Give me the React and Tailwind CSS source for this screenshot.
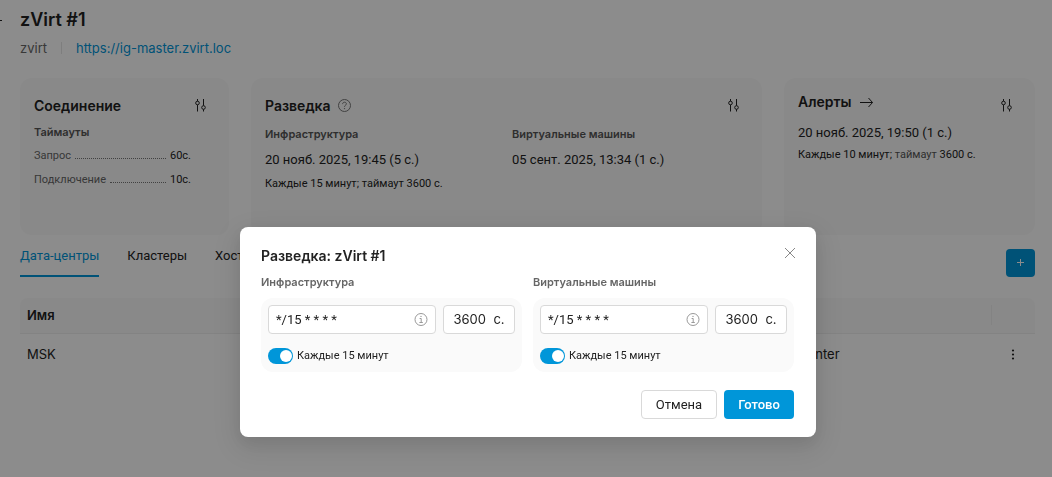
// Cluster page with the discovery schedule dialog open on top of it.

import { useState } from 'react';

const SlidersIcon = () => (
  <svg width="14" height="14" viewBox="0 0 14 14" fill="none" stroke="currentColor">
    <circle cx="3.5" cy="4" r="1.8" />
    <path d="M3.5 0v2.2M3.5 5.8v6.7" />
    <circle cx="9.5" cy="8.5" r="1.8" />
    <path d="M9.5 0v6.7M9.5 10.3v2.2" />
  </svg>
);

const SettingsButton = ({ label }) => (
  <button aria-label={label} className="text-[#222222]">
    <SlidersIcon />
  </button>
);

const InfoIcon = () => (
  <svg width="14" height="14" viewBox="0 0 14 14" fill="none" stroke="#999999">
    <circle cx="7" cy="6.5" r="6" />
    <path d="M5.6 5.5h1.6v4M5.4 9.5h3.4" />
    <circle cx="7" cy="3.4" r="0.7" fill="#999999" stroke="none" />
  </svg>
);

const HelpIcon = () => (
  <svg width="14" height="14" viewBox="0 0 14 14" fill="none" stroke="#777777">
    <circle cx="6.5" cy="6.5" r="6" />
    <path d="M4.6 5.1c0-1.2.8-1.9 1.9-1.9s1.9.7 1.9 1.7c0 1.3-1.9 1.3-1.9 2.9" />
    <circle cx="6.5" cy="9.6" r="0.7" fill="#777777" stroke="none" />
  </svg>
);

const TimeoutRow = ({ name, value }) => (
  <div className="flex items-baseline gap-1 text-[11px] leading-6">
    <dt className="text-[#666666]">{name}</dt>
    <span className="grow border-b border-dotted border-[#777777]" />
    <dd className="text-[#222222]">{value}</dd>
  </div>
);

const ScheduleField = ({ id, title }) => {
  const [cron, setCron] = useState('*/15 * * * *');
  const [timeout, setTimeoutValue] = useState('3600');
  const [enabled, setEnabled] = useState(true);

  return (
    <div className="min-w-0 flex-1">
      <h3 className="font-['Inter'] text-[11px] font-semibold leading-4 text-[#666666]">{title}</h3>
      <div className="mt-2 rounded-xl bg-[#fafafa] px-[7px] pb-2 pt-[7px]">
        <div className="flex gap-[7px]">
          <div className="flex h-[29px] min-w-0 flex-1 items-center rounded border border-[#d9d9d9] bg-white px-[7px]">
            <input
              id={`${id}-cron`}
              aria-label={`${title}: cron`}
              value={cron}
              onChange={(e) => setCron(e.target.value)}
              className="min-w-0 flex-1 bg-transparent text-[13px] outline-none"
            />
            <InfoIcon />
          </div>
          <label className="flex h-[29px] w-[72px] items-center justify-center gap-[6px] rounded border border-[#d9d9d9] bg-white font-['Inter'] text-[13px]">
            <input
              aria-label={`${title}: таймаут`}
              value={timeout}
              onChange={(e) => setTimeoutValue(e.target.value)}
              className="w-[34px] bg-transparent text-[13px] outline-none"
            />
            <span>с.</span>
          </label>
        </div>
        <label className="mt-[14px] flex h-4 items-center gap-1 text-[11px]">
          <input
            type="checkbox"
            checked={enabled}
            onChange={(e) => setEnabled(e.target.checked)}
            className="flex h-4 w-[25px] appearance-none items-center rounded-full bg-[#bfbfbf] px-px before:size-3 before:rounded-full before:bg-white checked:justify-end checked:bg-[#0096d9]"
          />
          Каждые 15 минут
        </label>
      </div>
    </div>
  );
};

const DiscoveryDialog = ({ onClose }) => (
  <div className="fixed inset-0 flex items-start justify-center overflow-auto bg-black/45 pl-1 pt-[227px]">
    <div
      role="dialog"
      aria-labelledby="dialog-title"
      className="w-full max-w-[576px] rounded-lg bg-white pb-[18px] pl-[21px] pr-[22px] pt-[18px] shadow-[0_6px_16px_rgba(0,0,0,0.08),0_9px_28px_8px_rgba(0,0,0,0.08)]"
    >
      <div className="flex items-start justify-between">
        <h2 id="dialog-title" className="font-['Inter'] text-sm font-semibold leading-[22px]">
          Разведка: zVirt #1
        </h2>
        <button aria-label="Закрыть" onClick={onClose} className="-mr-1 p-[2px] text-[#888888]">
          <svg width="12" height="12" viewBox="0 0 12 12" stroke="currentColor">
            <path d="M1 1l10 10M11 1L1 11" />
          </svg>
        </button>
      </div>
      <div className="mt-[7px] flex gap-[11px]">
        <ScheduleField id="infra" title="Инфраструктура" />
        <ScheduleField id="vms" title="Виртуальные машины" />
      </div>
      <div className="mt-[18px] flex justify-end gap-[7px]">
        <button onClick={onClose} className="h-[29px] w-[76px] rounded border border-[#d9d9d9] bg-white text-[13px]">
          Отмена
        </button>
        <button onClick={onClose} className="h-[29px] w-[70px] rounded bg-[#0096d9] text-[13px] font-medium text-white">
          Готово
        </button>
      </div>
    </div>
  </div>
);

const App = () => {
  const [open, setOpen] = useState(true);

  return (
    <div className="min-h-screen bg-white font-['Roboto','Liberation_Sans',sans-serif] text-[13px] text-[#222222]">
      <header className="flex pt-2">
        {/* Only the tip of the back arrow stays in view */}
        <button aria-label="Назад" className="mr-[18px] flex h-6 w-[2px] items-center justify-end overflow-hidden">
          <svg width="12" height="12" viewBox="0 0 12 12" className="shrink-0" fill="none" stroke="currentColor">
            <path d="M12 6.5H1M5 2L1 6.5 5 11" />
          </svg>
        </button>
        <div>
          <h1 className="font-['Inter'] text-lg font-semibold leading-6">zVirt #1</h1>
          <div className="mt-[6px] flex items-center font-['Inter'] leading-5">
            <span className="text-[#666666]">zvirt</span>
            <span className="mx-[14px] h-3 w-px bg-[#e5e5e5]" />
            <a href="https://ig-master.zvirt.loc" className="text-[#0096d9]">https://ig-master.zvirt.loc</a>
          </div>
        </div>
      </header>

      <main className="pl-5 pr-[17px]">
        <div className="mt-5 grid grid-cols-[209fr_511fr_251fr] gap-[22px]">
          <section className="min-h-[157px] rounded-xl bg-[#fafafa] px-[14px] pt-[18px]">
            <div className="flex items-center justify-between pr-[7px]">
              <h2 className="font-['Inter'] text-sm font-semibold leading-5">Соединение</h2>
              <SettingsButton label="Настроить соединение" />
            </div>
            <h3 className="mt-2 font-['Inter'] text-[11px] font-semibold leading-4 text-[#555555]">Таймауты</h3>
            <dl className="mt-1 pr-6">
              <TimeoutRow name="Запрос" value="60с." />
              <TimeoutRow name="Подключение" value="10с." />
            </dl>
          </section>

          <section className="min-h-[157px] rounded-xl bg-[#fafafa] px-[14px] pt-[18px]">
            <div className="flex items-center justify-between pr-[7px]">
              <div className="flex items-center gap-[7px]">
                <h2 className="font-['Inter'] text-sm font-semibold leading-5">Разведка</h2>
                <HelpIcon />
              </div>
              <SettingsButton label="Настроить разведку" />
            </div>
            <div className="mt-[10px] grid grid-cols-[247fr_236fr]">
              <div>
                <h3 className="font-['Inter'] text-[11px] font-semibold leading-4 text-[#555555]">Инфраструктура</h3>
                <p className="mt-2 leading-5">20 нояб. 2025, 19:45 (5 с.)</p>
                <p className="mt-[6px] text-[11px] leading-4">Каждые 15 минут; таймаут 3600 с.</p>
              </div>
              <div>
                <h3 className="font-['Inter'] text-[11px] font-semibold leading-4 text-[#555555]">Виртуальные машины</h3>
                <p className="mt-2 leading-5">05 сент. 2025, 13:34 (1 с.)</p>
              </div>
            </div>
          </section>

          <section className="min-h-[157px] rounded-xl bg-[#fafafa] px-[14px] pt-[14px]">
            <div className="flex h-[23px] items-start justify-between pr-[7px]">
              <div className="flex items-center gap-2">
                <h2 className="font-['Inter'] text-sm font-semibold leading-5">Алерты</h2>
                <a href="#alerts" aria-label="Открыть алерты">
                  <svg width="14" height="12" viewBox="0 0 14 12" fill="none" stroke="currentColor">
                    <path d="M0 6.5h12.5M8.5 2L12.5 6.5l-4 4.5" />
                  </svg>
                </a>
              </div>
              <div className="pt-[7px]">
                <SettingsButton label="Настроить алерты" />
              </div>
            </div>
            <p className="mt-2 leading-5">20 нояб. 2025, 19:50 (1 с.)</p>
            <p className="mt-[4px] text-[11px] leading-4">
              Каждые 10 минут; <span className="text-[#555555]">таймаут</span> 3600 с.
            </p>
          </section>
        </div>

        <div className="flex h-[42px] items-end justify-between">
          <nav className="flex h-full gap-7">
            <a href="#datacenters" className="flex items-center border-b-2 border-[#0096d9] pt-[2px] text-[#0096d9]">Дата-центры</a>
            <a href="#clusters" className="flex items-center border-b-2 border-transparent pt-[2px]">Кластеры</a>
            <a href="#hosts" className="flex items-center border-b-2 border-transparent pt-[2px]">Хосты</a>
          </nav>
          <button
            aria-label="Добавить"
            onClick={() => setOpen(true)}
            className="flex h-7 w-[29px] items-center justify-center rounded bg-[#0096d9] text-white"
          >
            <svg width="8" height="8" viewBox="0 0 8 8" stroke="currentColor">
              <path d="M3.5 0v7M0 3.5h7" />
            </svg>
          </button>
        </div>

        <table className="mt-[21px] w-full table-fixed text-left font-['Inter']">
          <thead>
            <tr className="h-[35px] border-b border-[#eeeeee]">
              <th className="rounded-tl-lg bg-[#fafafa] px-[7px] font-semibold">Имя</th>
              <th className="w-[228px] bg-[#fafafa]" aria-label="Описание" />
              <th className="w-[44px] rounded-tr-lg bg-[#fafafa]" aria-label="Действия">
                <span className="block h-5 w-px bg-[#eeeeee]" />
              </th>
            </tr>
          </thead>
          <tbody>
            <tr className="h-[43px]">
              <td className="px-[7px]">MSK</td>
              <td className="px-[9px]">Datacenter</td>
              <td>
                <button aria-label="Действия" className="mx-auto flex">
                  <svg width="4" height="12" viewBox="0 0 4 12" fill="currentColor">
                    <circle cx="2" cy="1.5" r="1.1" />
                    <circle cx="2" cy="5.5" r="1.1" />
                    <circle cx="2" cy="9.5" r="1.1" />
                  </svg>
                </button>
              </td>
            </tr>
          </tbody>
        </table>
      </main>

      {open && <DiscoveryDialog onClose={() => setOpen(false)} />}
    </div>
  );
};

export default App;
